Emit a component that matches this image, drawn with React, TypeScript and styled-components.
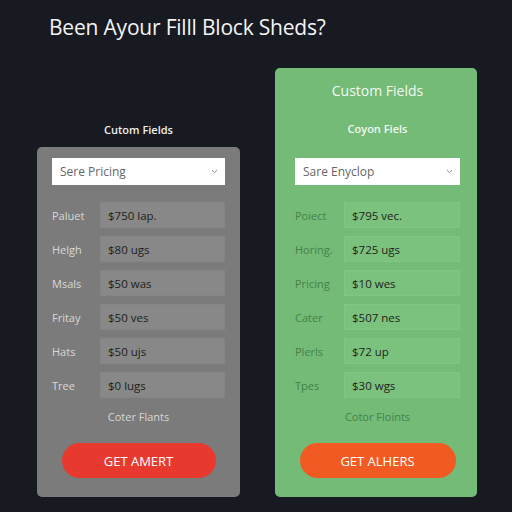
import styled, { createGlobalStyle } from "styled-components";

type Variant = "grey" | "green";

const rowsGrey = [
  { label: "Paluet", value: "$750 lap." },
  { label: "Helgh", value: "$80 ugs" },
  { label: "Msals", value: "$50 was" },
  { label: "Fritay", value: "$50 ves" },
  { label: "Hats", value: "$50 ujs" },
  { label: "Tree", value: "$0 lugs" },
];

const rowsGreen = [
  { label: "Poiect", value: "$795 vec." },
  { label: "Horing.", value: "$725 ugs" },
  { label: "Pricing", value: "$10 wes" },
  { label: "Cater", value: "$507 nes" },
  { label: "Plerls", value: "$72 up" },
  { label: "Tpes", value: "$30 wgs" },
];

const App = () => {
  return (
    <>
      <GlobalStyle />
      <Page>
        <Title>Been Ayour Filll Block Sheds?</Title>
        <Columns>
          <Column>
            <Caption>Cutom Fields</Caption>
            <Card variant="grey">
              <Select variant="grey">
                <span>Sere Pricing</span>
                <Chevron />
              </Select>
              <Rows>
                {rowsGrey.map((row) => (
                  <Row key={row.label}>
                    <Label variant="grey">{row.label}</Label>
                    <Field variant="grey">{row.value}</Field>
                  </Row>
                ))}
              </Rows>
              <Footer variant="grey">Coter Flants</Footer>
              <Button variant="grey">GET AMERT</Button>
            </Card>
          </Column>
          <Card variant="green">
            <CardTitle>Custom Fields</CardTitle>
            <CardSub>Coyon Fiels</CardSub>
            <Select variant="green">
              <span>Sare Enyclop</span>
              <Chevron />
            </Select>
            <Rows>
              {rowsGreen.map((row) => (
                <Row key={row.label}>
                  <Label variant="green">{row.label}</Label>
                  <Field variant="green">{row.value}</Field>
                </Row>
              ))}
            </Rows>
            <Footer variant="green">Cotor Floints</Footer>
            <Button variant="green">GET ALHERS</Button>
          </Card>
        </Columns>
      </Page>
    </>
  );
};

const Chevron = () => (
  <svg width="7" height="5" viewBox="0 0 7 5">
    <path d="M1 1.2 L3.5 3.6 L6 1.2" fill="none" stroke="#8a8a8a" strokeWidth="1" />
  </svg>
);

export default App;

const GlobalStyle = createGlobalStyle`
  body {
    margin: 0;
    background: #171b21;
    font-family: "Open Sans", "Liberation Sans", sans-serif;
  }
`;

const Page = styled.div`
  width: 512px;
  height: 512px;
  box-sizing: border-box;
  padding: 13px 0 0 0;
  display: flex;
  flex-direction: column;
  background: #171b21;
`;

const Title = styled.h1`
  margin: 0 0 0 49px;
  font-size: 21px;
  font-weight: 400;
  color: #f4f4f4;
  letter-spacing: -0.2px;
  line-height: 28px;
`;

const Columns = styled.div`
  display: flex;
  align-items: flex-end;
  gap: 35px;
  padding-left: 37px;
  margin-top: 27px;
`;

const Column = styled.div`
  display: flex;
  flex-direction: column;
  align-items: center;
`;

const Caption = styled.div`
  font-size: 11px;
  font-weight: 600;
  color: #eeeeee;
  margin-bottom: 10px;
`;

const Card = styled.div<{ variant: Variant }>`
  box-sizing: border-box;
  display: flex;
  flex-direction: column;
  width: ${({ variant }) => (variant === "grey" ? "203px" : "202px")};
  height: ${({ variant }) => (variant === "grey" ? "350px" : "429px")};
  border-radius: 5px;
  background: ${({ variant }) => (variant === "grey" ? "#7b7b7b" : "#74bb77")};
  padding: ${({ variant }) =>
    variant === "grey" ? "11px 15px 0 15px" : "0 17px 0 20px"};
`;

const CardTitle = styled.div`
  font-size: 14px;
  color: #f2f8f2;
  text-align: center;
  margin-top: 13px;
  line-height: 20px;
`;

const CardSub = styled.div`
  font-size: 11px;
  font-weight: 600;
  color: #f2f8f2;
  text-align: center;
  margin-top: 20px;
  line-height: 16px;
`;

const Select = styled.div<{ variant: Variant }>`
  box-sizing: border-box;
  height: 27px;
  display: flex;
  align-items: center;
  justify-content: space-between;
  padding: 0 7px 0 8px;
  background: #ffffff;
  color: #666666;
  font-size: 12px;
  margin-top: ${({ variant }) => (variant === "green" ? "21px" : "0")};
`;

const Rows = styled.div`
  display: flex;
  flex-direction: column;
  gap: 8px;
  margin-top: 17px;
`;

const Row = styled.div`
  display: flex;
  align-items: center;
`;

const Label = styled.div<{ variant: Variant }>`
  width: ${({ variant }) => (variant === "grey" ? "48px" : "49px")};
  font-size: 11px;
  color: ${({ variant }) => (variant === "grey" ? "#d8d8d8" : "#43824a")};
`;

const Field = styled.div<{ variant: Variant }>`
  box-sizing: border-box;
  flex: 1;
  height: 26px;
  display: flex;
  align-items: center;
  padding-left: 7px;
  font-size: 11.5px;
  color: #1c1f1c;
  background: ${({ variant }) => (variant === "grey" ? "#888888" : "#7cc27f")};
  border: 1px solid
    ${({ variant }) => (variant === "grey" ? "#858585" : "#83c585")};
`;

const Footer = styled.div<{ variant: Variant }>`
  text-align: center;
  font-size: 11px;
  margin-top: 11px;
  line-height: 16px;
  color: ${({ variant }) => (variant === "grey" ? "#d6d6d6" : "#43824a")};
`;

const Button = styled.div<{ variant: Variant }>`
  align-self: center;
  width: ${({ variant }) => (variant === "grey" ? "154px" : "156px")};
  height: 35px;
  margin-top: 18px;
  border-radius: 18px;
  display: flex;
  align-items: center;
  justify-content: center;
  font-size: 13px;
  color: #ffffff;
  background: ${({ variant }) => (variant === "grey" ? "#e8392f" : "#f15a22")};
`;
